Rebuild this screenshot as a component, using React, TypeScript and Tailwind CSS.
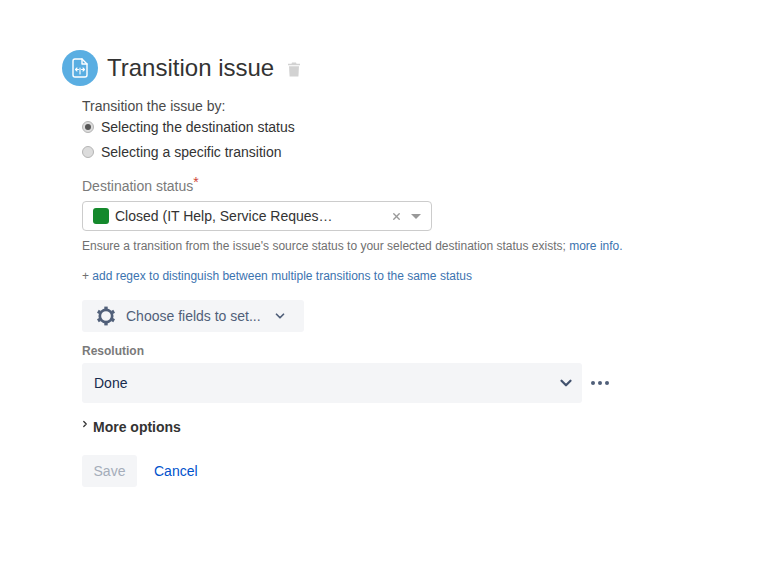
import React from 'react';
import { ChevronDown, ChevronRight, X } from 'lucide-react';

const GearIcon: React.FC = () => (
  <svg width="20" height="20" viewBox="0 0 20 20" fill="none" stroke="#505f79">
    <circle cx="10" cy="10" r="6.2" strokeWidth="2.7" />
    {[0, 60, 120, 180, 240, 300].map((deg) => (
      <line key={deg} x1="10" y1="3" x2="10" y2="0.6" strokeWidth="3.4" transform={`rotate(${deg} 10 10)`} />
    ))}
  </svg>
);

const App: React.FC = () => {
  return (
    <div className="min-h-[586px] bg-white pl-[62px] pt-[50px] font-['Liberation_Sans',Arial,sans-serif] text-[#333333]">
      {/* Header */}
      <div className="flex items-center h-9">
        <div className="w-9 h-9 rounded-full bg-[#5aaee2] flex items-center justify-center">
          <svg width="20" height="22" viewBox="0 0 20 22" fill="none" stroke="white" strokeWidth="1.4" strokeLinecap="round" strokeLinejoin="round">
            <path d="M5 2h7l5 5v11a2 2 0 0 1-2 2H5a2 2 0 0 1-2-2V4a2 2 0 0 1 2-2z" />
            <path d="M12 2v5h5" />
            <path d="M10 11v6M8.5 12.5h-3M7 11l-1.5 1.5L7 14M11.5 12.5h3M13 11l1.5 1.5L13 14" strokeWidth="1.1" />
          </svg>
        </div>
        <h1 className="ml-[9px] text-[24px] leading-9 font-normal text-[#333333]">Transition issue</h1>
        <svg className="ml-[14px] mt-[3px]" width="12" height="15" viewBox="0 0 12 15" fill="#d2d2d2">
          <path d="M4 0.5h4l.5 1.2H12v1.6H0V1.7h3.5z" />
          <path d="M1 4.3h10l-.6 10.2H1.6z" />
        </svg>
      </div>

      <div className="ml-5 mt-[10px] w-[560px]">
        {/* Radios */}
        <div className="text-sm leading-[20px] text-[#4a4a4a]">Transition the issue by:</div>
        <div className="flex items-center h-[25px] mt-[-2px] text-sm text-[#333333]">
          <span className="w-3 h-3 rounded-full bg-[#dcdcdc] border border-[#b5b5b5] flex items-center justify-center">
            <span className="w-1.5 h-1.5 rounded-full bg-[#555555]" />
          </span>
          <span className="ml-[7px]">Selecting the destination status</span>
        </div>
        <div className="flex items-center h-[25px] text-sm text-[#333333]">
          <span className="w-3 h-3 rounded-full bg-[#dcdcdc] border border-[#b5b5b5]" />
          <span className="ml-[7px]">Selecting a specific transition</span>
        </div>

        {/* Destination status */}
        <div className="mt-3 text-sm leading-[20px] text-[#7a7a7a]">
          Destination status<span className="relative top-[-4px] text-[#d04437]">*</span>
        </div>
        <div className="mt-[5px] w-[350px] h-[30px] rounded border border-[#cccccc] bg-white flex items-center pl-[10px] pr-[9px]">
          <span className="w-4 h-4 rounded-[3px] bg-[#14892c]" />
          <span className="ml-[6px] flex-1 text-sm text-[#333333]">Closed (IT Help, Service Reques…</span>
          <X size={11} strokeWidth={3} className="text-[#999999]" />
          <span className="ml-[9px] mr-[1px] w-0 h-0 border-x-[5px] border-x-transparent border-t-[5px] border-t-[#999999]" />
        </div>
        <div className="mt-[7px] text-xs leading-[16px] whitespace-nowrap text-[#707070]">
          Ensure a transition from the issue's source status to your selected destination status exists; <span className="text-[#3b73af]">more info.</span>
        </div>
        <div className="mt-[14px] text-xs leading-[16px] whitespace-nowrap text-[#3b73af]">
          <span className="text-[#707070]">+ </span>add regex to distinguish between multiple transitions to the same status
        </div>

        {/* Fields */}
        <div className="mt-4 w-[222px] h-8 rounded-[3px] bg-[#f4f5f7] flex items-center pl-[14px] text-[#505f79]">
          <GearIcon />
          <span className="ml-[10px] text-sm">Choose fields to set...</span>
          <ChevronDown size={14} strokeWidth={3} className="ml-[12px]" />
        </div>
        <div className="mt-[11px] text-xs leading-[16px] font-bold text-[#7a7a7a]">Resolution</div>
        <div className="mt-1 flex items-center">
          <div className="w-[500px] h-10 rounded-[3px] bg-[#f4f5f7] flex items-center justify-between pl-3 pr-[7px]">
            <span className="text-sm text-[#172b4d]">Done</span>
            <ChevronDown size={18} strokeWidth={3} className="text-[#42526e]" />
          </div>
          <div className="ml-[9px] flex gap-[3px]">
            <span className="w-1 h-1 rounded-full bg-[#505f79]" />
            <span className="w-1 h-1 rounded-full bg-[#505f79]" />
            <span className="w-1 h-1 rounded-full bg-[#505f79]" />
          </div>
        </div>

        {/* More options */}
        <div className="mt-[14px] flex items-center h-[20px]">
          <ChevronRight size={10} strokeWidth={3} className="mt-[-6px] ml-[-2px] text-[#333333]" />
          <span className="ml-[3px] text-sm font-bold text-[#333333]">More options</span>
        </div>

        {/* Actions */}
        <div className="mt-[18px] flex items-center">
          <div className="w-[55px] h-8 rounded-[3px] bg-[#f4f5f7] flex items-center justify-center text-sm text-[#a5adba]">Save</div>
          <span className="ml-[17px] text-sm text-[#0052cc]">Cancel</span>
        </div>
      </div>
    </div>
  );
};

export default App;
